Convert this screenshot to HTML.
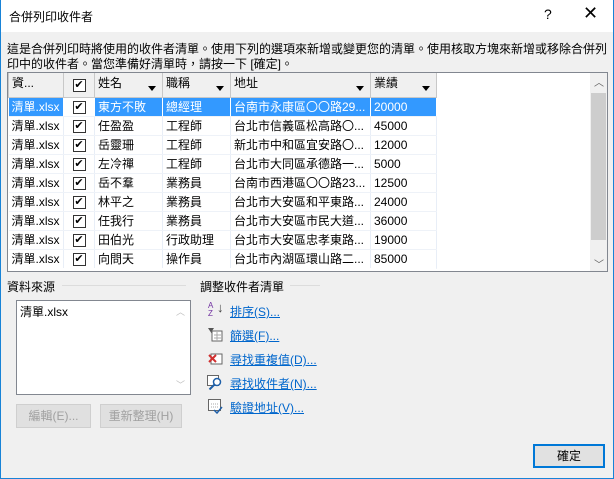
<!DOCTYPE html>
<html><head><meta charset="utf-8"><style>
*{margin:0;padding:0;box-sizing:border-box}
body{width:614px;height:479px;overflow:hidden;background:#f0f0f0;font-family:"Liberation Sans","Noto Sans CJK TC",sans-serif;font-size:12px;color:#000;position:relative}
.a{position:absolute;white-space:nowrap}
#win{position:absolute;left:0;top:0;width:614px;height:479px;border:1px solid #1883d7;border-top:none}
#title{position:absolute;left:0;top:0;width:614px;height:32px;background:#fff}
table{border-collapse:collapse;position:absolute;left:8px;top:73px;table-layout:fixed;width:428px}
td{height:19px;padding:0 3px;border-right:1px solid #e8eef7;border-bottom:1px solid #eef2f8;white-space:nowrap;overflow:hidden;font-size:12px}
th{height:24px;background:#f0f0f0;border:1px solid #c8c8c8;border-top:none;font-weight:normal;text-align:left;vertical-align:top;padding:1px 3px;position:relative;font-size:12px;overflow:hidden}
th .arr{position:absolute;right:6px;top:13px;width:0;height:0;border-left:4px solid transparent;border-right:4px solid transparent;border-top:5px solid #000}
.cb{display:inline-block;width:13px;height:13px;border:1px solid #333;background:#fff;color:#000;font-size:11px;line-height:11px;text-align:center;vertical-align:middle}
tr.sel td{background:#3399ff;color:#fff;border-right-color:#fff}
tr.sel td.c{background:#fff}
.lnk{color:#0066cc;text-decoration:underline}
.btn{position:absolute;background:#e0e0e0;border:1px solid #cfcfcf;color:#a0a0a0;text-align:center;line-height:22px}
</style></head><body>
<div id="title"></div>
<div class="a" style="left:9px;top:8px">合併列印收件者</div>
<div class="a" style="left:544px;top:6px;font-size:14px">?</div>
<div class="a" style="left:583px;top:3px;font-size:18px">✕</div>
<div class="a" style="left:7px;top:40px">這是合併列印時將使用的收件者清單。使用下列的選項來新增或變更您的清單。使用核取方塊來新增或移除合併列</div>
<div class="a" style="left:7px;top:55px">印中的收件者。當您準備好清單時，請按一下 [確定]。</div>
<div class="a" style="left:7px;top:72px;width:601px;height:200px;background:#fff;border:1px solid #828790"></div>
<table>
<colgroup><col style="width:55px"><col style="width:31px"><col style="width:68px"><col style="width:68px"><col style="width:140px"><col style="width:66px"></colgroup>
<tr><th>資...</th><th style="text-align:center;padding-top:5px"><span class="cb">✔</span></th><th>姓名<span class="arr"></span></th><th>職稱<span class="arr"></span></th><th>地址<span class="arr"></span></th><th>業績<span class="arr"></span></th></tr>
<tr class="sel"><td>清單.xlsx</td><td class="c" style="text-align:center"><span class="cb">✔</span></td><td>東方不敗</td><td>總經理</td><td>台南市永康區〇〇路29...</td><td>20000</td></tr>
<tr><td>清單.xlsx</td><td style="text-align:center"><span class="cb">✔</span></td><td>任盈盈</td><td>工程師</td><td>台北市信義區松高路〇...</td><td>45000</td></tr>
<tr><td>清單.xlsx</td><td style="text-align:center"><span class="cb">✔</span></td><td>岳靈珊</td><td>工程師</td><td>新北市中和區宜安路〇...</td><td>12000</td></tr>
<tr><td>清單.xlsx</td><td style="text-align:center"><span class="cb">✔</span></td><td>左冷禪</td><td>工程師</td><td>台北市大同區承德路一...</td><td>5000</td></tr>
<tr><td>清單.xlsx</td><td style="text-align:center"><span class="cb">✔</span></td><td>岳不羣</td><td>業務員</td><td>台南市西港區〇〇路23...</td><td>12500</td></tr>
<tr><td>清單.xlsx</td><td style="text-align:center"><span class="cb">✔</span></td><td>林平之</td><td>業務員</td><td>台北市大安區和平東路...</td><td>24000</td></tr>
<tr><td>清單.xlsx</td><td style="text-align:center"><span class="cb">✔</span></td><td>任我行</td><td>業務員</td><td>台北市大安區市民大道...</td><td>36000</td></tr>
<tr><td>清單.xlsx</td><td style="text-align:center"><span class="cb">✔</span></td><td>田伯光</td><td>行政助理</td><td>台北市大安區忠孝東路...</td><td>19000</td></tr>
<tr><td>清單.xlsx</td><td style="text-align:center"><span class="cb">✔</span></td><td>向問天</td><td>操作員</td><td>台北市內湖區環山路二...</td><td>85000</td></tr>
</table>
<div class="a" style="left:8px;top:268px;width:428px;height:3px;background:#fff"></div>
<div class="a" style="left:590px;top:73px;width:17px;height:198px;background:#f0f0f0"></div>
<div class="a" style="left:591px;top:93px;width:15px;height:147px;background:#cdcdcd"></div>
<div class="a" style="left:594px;top:74px;font-size:10px;color:#606060">︿</div>
<div class="a" style="left:594px;top:256px;font-size:10px;color:#606060">﹀</div>

<div class="a" style="left:7px;top:278px">資料來源</div>
<div class="a" style="left:62px;top:285px;width:124px;height:1px;background:#dcdcdc"></div>
<div class="a" style="left:16px;top:300px;width:175px;height:95px;background:#fff;border:1px solid #828790"></div>
<div class="a" style="left:20px;top:303px">清單.xlsx</div>
<div class="a" style="left:176px;top:305px;font-size:9px;color:#c0c0c0">︿</div>
<div class="a" style="left:176px;top:378px;font-size:9px;color:#c0c0c0">﹀</div>
<div class="btn" style="left:16px;top:404px;width:75px;height:24px">編輯(E)...</div>
<div class="btn" style="left:100px;top:404px;width:82px;height:24px">重新整理(H)</div>

<div class="a" style="left:200px;top:278px">調整收件者清單</div>
<div class="a" style="left:290px;top:285px;width:30px;height:1px;background:#dcdcdc"></div>
<div class="a" style="left:208px;top:302px;font-size:8px;line-height:8px;color:#7030a0">A<br>Z</div>
<div class="a" style="left:217px;top:300px;font-size:13px;color:#444">↓</div>
<div class="a lnk" style="left:230px;top:303px">排序(S)...</div>
<svg class="a" style="left:208px;top:327px" width="15" height="15"><path d="M0 1h6l-2 3v3" fill="#555"/><rect x="4" y="4" width="10" height="10" fill="#fff" stroke="#666"/><path d="M6 8h7M6 11h7M9 5v9" stroke="#aaa"/></svg>
<div class="a lnk" style="left:230px;top:327px">篩選(F)...</div>
<svg class="a" style="left:208px;top:351px" width="15" height="15"><rect x="3" y="3" width="11" height="10" fill="#fff" stroke="#666"/><path d="M1 4l7 7M8 4l-7 7" stroke="#d03030" stroke-width="2"/></svg>
<div class="a lnk" style="left:230px;top:351px">尋找重複值(D)...</div>
<svg class="a" style="left:207px;top:375px" width="16" height="15"><rect x="0.5" y="0.5" width="11" height="10" fill="#fff" stroke="#666"/><circle cx="10" cy="7" r="3.5" fill="#fff" stroke="#1e5fa8" stroke-width="1.5"/><path d="M7.5 9.5l-5 5" stroke="#1e5fa8" stroke-width="2"/></svg>
<div class="a lnk" style="left:230px;top:375px">尋找收件者(N)...</div>
<svg class="a" style="left:208px;top:399px" width="15" height="15"><rect x="0.5" y="0.5" width="12" height="11" fill="#fff" stroke="#666"/><path d="M3 5h7M3 8h7" stroke="#aaa" stroke-dasharray="1 1"/><path d="M6 11l3 3 5-6" stroke="#1e5fa8" fill="none" stroke-width="1.5"/></svg>
<div class="a lnk" style="left:230px;top:399px">驗證地址(V)...</div>

<div class="a" style="left:533px;top:444px;width:72px;height:24px;border:2px solid #0078d7;background:#e1e1e1;text-align:center;line-height:20px">確定</div>
<div id="win"></div>
</body></html>
